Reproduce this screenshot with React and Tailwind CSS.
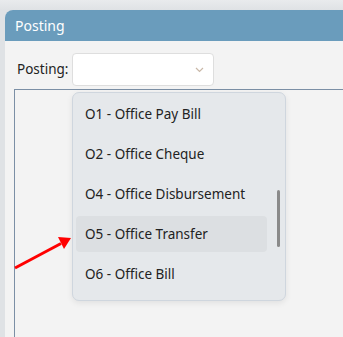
import React from "react";

const items = [
  "O1 - Office Pay Bill",
  "O2 - Office Cheque",
  "O4 - Office Disbursement",
  "O5 - Office Transfer",
  "O6 - Office Bill",
];

export default function App() {
  return (
    <div
      className="w-[343px] h-[337px] overflow-hidden bg-[#dfe2e5] relative"
      style={{ fontFamily: '"Noto Sans", "Open Sans", sans-serif' }}
    >
      <div className="h-[10px] bg-gradient-to-b from-[#e9ebed] to-[#dfe2e5]" />
      <div className="ml-[5px] h-[327px] rounded-tl-[8px] overflow-hidden bg-[#f3f3f3] flex flex-col">
        <div className="h-[31px] bg-[#6a9cbc] flex items-center pl-[10px] text-white text-[14px] shrink-0">
          Posting
        </div>
        <div className="flex items-center pt-[12px] pl-[12px] h-[45px] shrink-0">
          <span className="text-[13.5px] text-[#222] w-[55px]">Posting:</span>
          <div className="w-[142px] h-[33px] bg-white rounded-[4px] border border-[#dedede] flex items-center justify-end pr-[9px]">
            <svg width="9" height="6" viewBox="0 0 9 6">
              <path d="M1 1 L4.5 4.5 L8 1" fill="none" stroke="#c9b8a8" strokeWidth="1.2" />
            </svg>
          </div>
        </div>
        <div className="ml-[9px] mt-[3px] flex-1 border-l border-t border-[#7b8fa5] relative" />
      </div>

      <div className="absolute left-[72px] top-[92px] w-[214px] h-[209px] bg-[#e5e8eb] border border-[#cfd6de] rounded-[7px] shadow-[0_2px_6px_rgba(0,0,0,0.08)] pt-[1px] px-[3px]">
        {items.map((t, i) => (
          <div key={t} className="h-[40px] py-[2px] w-[191px]">
            <div
              className={
                "h-full flex items-center pl-[9px] text-[13.5px] text-[#222] rounded-[4px] " +
                (i === 3 ? "bg-[#dcdfe2]" : "")
              }
            >
              {t}
            </div>
          </div>
        ))}
        <div className="absolute left-[204px] top-[97px] w-[3px] h-[57px] bg-[#8a8a8a] rounded-full" />
      </div>

      <svg className="absolute left-0 top-0" width="343" height="337">
        <line x1="15" y1="268" x2="61" y2="243.5" stroke="#ff0000" strokeWidth="3" />
        <polygon points="71,238 58,237 64,249" fill="#ff0000" />
      </svg>
    </div>
  );
}
